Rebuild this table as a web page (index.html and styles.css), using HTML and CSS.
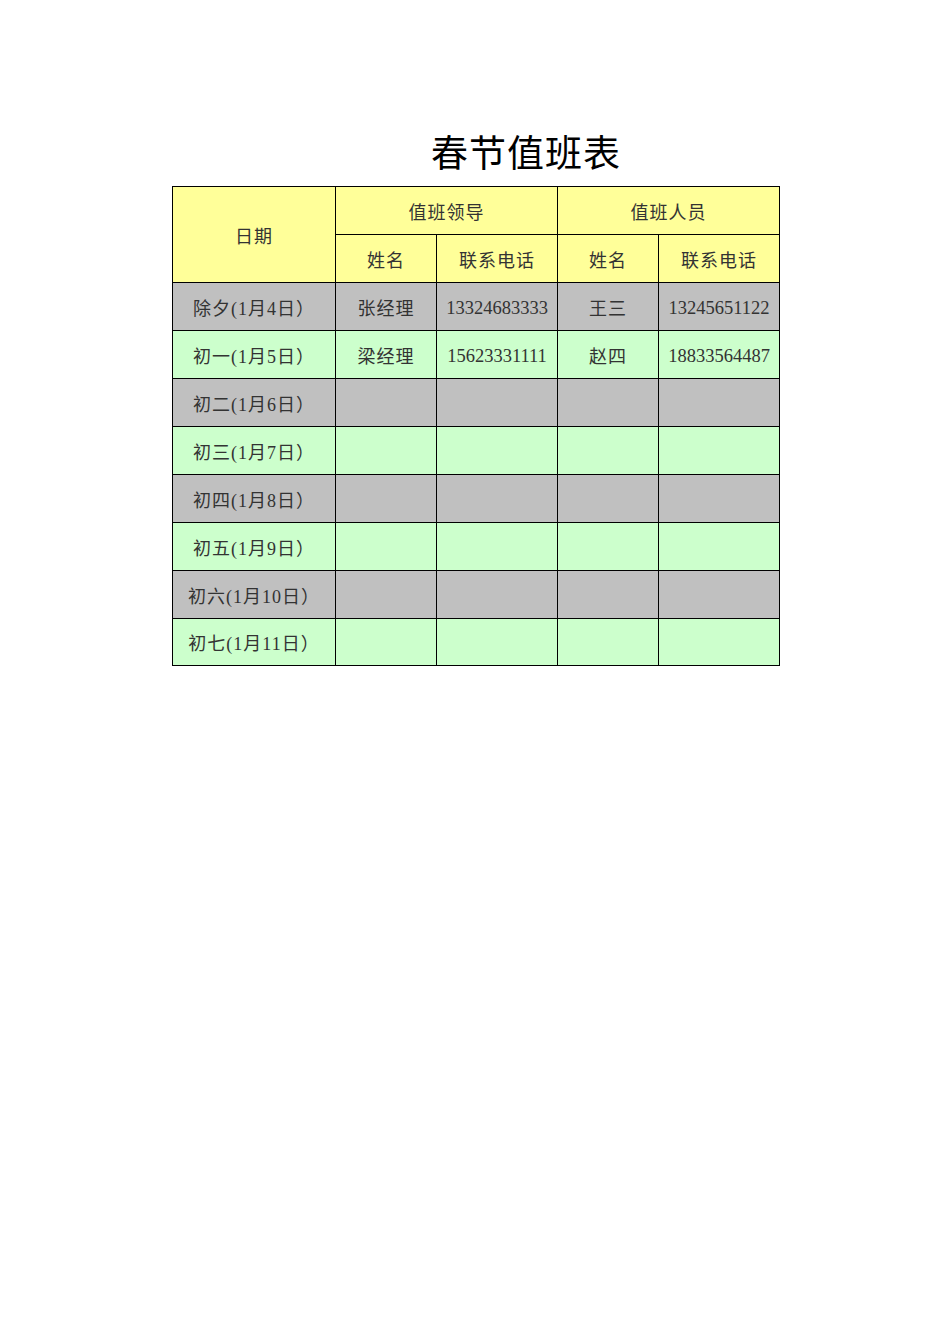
FILE: index.html
```html
<!DOCTYPE html>
<html>
<head>
<meta charset="utf-8">
<link rel="stylesheet" href="styles.css">
</head>
<body>
<div class="page">
  <h1 class="title">春节值班表</h1>
  <table class="duty">
    <colgroup>
      <col class="c-date"><col class="c-name"><col class="c-phone"><col class="c-name"><col class="c-phone">
    </colgroup>
    <tr class="head">
      <td rowspan="2">日期</td>
      <td colspan="2">值班领导</td>
      <td colspan="2">值班人员</td>
    </tr>
    <tr class="head">
      <td>姓名</td><td>联系电话</td><td>姓名</td><td>联系电话</td>
    </tr>
    <tr class="gray"><td>除夕(1月4日）</td><td>张经理</td><td><span class="num">13324683333</span></td><td>王三</td><td><span class="num">13245651122</span></td></tr>
    <tr class="green"><td>初一(1月5日）</td><td>梁经理</td><td><span class="num">15623331111</span></td><td>赵四</td><td><span class="num">18833564487</span></td></tr>
    <tr class="gray"><td>初二(1月6日）</td><td></td><td></td><td></td><td></td></tr>
    <tr class="green"><td>初三(1月7日）</td><td></td><td></td><td></td><td></td></tr>
    <tr class="gray"><td>初四(1月8日）</td><td></td><td></td><td></td><td></td></tr>
    <tr class="green"><td>初五(1月9日）</td><td></td><td></td><td></td><td></td></tr>
    <tr class="gray"><td>初六(1月10日）</td><td></td><td></td><td></td><td></td></tr>
    <tr class="green"><td>初七(1月11日）</td><td></td><td></td><td></td><td></td></tr>
  </table>
</div>
</body>
</html>
```
FILE: styles.css
```css
html, body {
  margin: 0;
  padding: 0;
  background: #ffffff;
}
.page {
  width: 950px;
  height: 1344px;
  padding-top: 126px;
  box-sizing: border-box;
}
.title {
  margin: 0 0 10px 0;
  padding-left: 431px;
  font-family: "Noto Sans CJK SC", sans-serif;
  font-weight: 400;
  font-size: 37px;
  line-height: 50px;
  color: #000;
  letter-spacing: 1px;
}
.duty {
  margin-left: 172px;
  border-collapse: collapse;
  table-layout: fixed;
  width: 608px;
  font-family: "Liberation Serif", "Noto Sans CJK SC", serif;
  font-size: 18px;
  color: #333;
}
.c-date { width: 163px; }
.c-name { width: 101px; }
.c-phone { width: 121px; }
.duty td {
  border: 1px solid #000;
  height: 47px;
  padding: 0;
  text-align: center;
  vertical-align: middle;
  white-space: nowrap;
  letter-spacing: 1px;
}
.duty tr:last-child td {
  height: 46px;
}
.num {
  font-size: 18.5px;
  letter-spacing: 0;
  vertical-align: -3px;
}
.head td { background: #ffff99; }
.gray td { background: #c0c0c0; }
.green td { background: #ccffcc; }
```
